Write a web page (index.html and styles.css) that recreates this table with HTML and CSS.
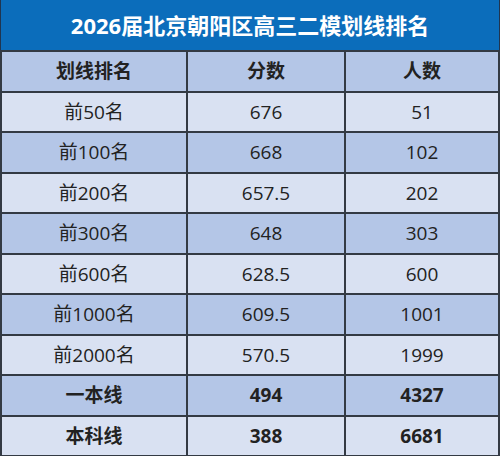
FILE: index.html
```html
<!DOCTYPE html>
<html>
<head>
  <meta charset="utf-8">
  <title>2026届北京朝阳区高三二模划线排名</title>
  <link rel="stylesheet" href="styles.css">
</head>
<body>
  <div class="sheet">
    <div class="title">2026届北京朝阳区高三二模划线排名</div>

    <table class="rank-table">
      <colgroup>
        <col class="col-name">
        <col class="col-score">
        <col class="col-count">
      </colgroup>
      <tr class="head">
        <th>划线排名</th>
        <th>分数</th>
        <th>人数</th>
      </tr>
      <tr class="light"><td>前50名</td><td>676</td><td>51</td></tr>
      <tr class="dark"><td>前100名</td><td>668</td><td>102</td></tr>
      <tr class="light"><td>前200名</td><td>657.5</td><td>202</td></tr>
      <tr class="dark"><td>前300名</td><td>648</td><td>303</td></tr>
      <tr class="light"><td>前600名</td><td>628.5</td><td>600</td></tr>
      <tr class="dark"><td>前1000名</td><td>609.5</td><td>1001</td></tr>
      <tr class="light"><td>前2000名</td><td>570.5</td><td>1999</td></tr>
      <!-- cut-off lines -->
      <tr class="dark line"><td>一本线</td><td>494</td><td>4327</td></tr>
      <tr class="light line"><td>本科线</td><td>388</td><td>6681</td></tr>
    </table>
  </div>
</body>
</html>
```

FILE: styles.css
```css
body {
  margin: 0;
  padding: 0;
  background-color: #fff;
  font-family: "Open Sans", "Noto Sans CJK SC", sans-serif;
  color: #222;
}

.sheet {
  width: 500px;
  height: 456px;
  overflow: hidden;
}

.title {
  height: 50px;
  line-height: 50px;
  background-color: #0b6dbb;
  color: #fff;
  font-size: 22px;
  font-weight: bold;
  text-align: center;
  border-left: 1px solid #1f3550;
  border-right: 1px solid #1f3550;
}

.rank-table {
  width: 500px;
  border-collapse: collapse;
  table-layout: fixed;
}

.col-name {
  width: 186px;
}

.col-score {
  width: 158px;
}

.rank-table th,
.rank-table td {
  height: 38.5px;
  padding: 0;
  text-align: center;
  vertical-align: middle;
  font-size: 19px;
  line-height: 20px;
  border: 2px solid #333a44;
}

.rank-table th {
  font-weight: bold;
}

.head,
.dark {
  background-color: #b4c6e7;
}

.light {
  background-color: #d9e1f2;
}

.line td {
  font-weight: bold;
}
```
